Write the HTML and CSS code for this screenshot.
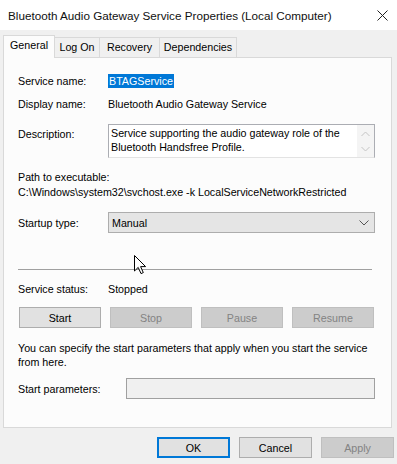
FILE: index.html
```html
<!DOCTYPE html>
<html lang="en">
<head>
  <meta charset="UTF-8">
  <title>Bluetooth Audio Gateway Service Properties (Local Computer)</title>
  <link rel="stylesheet" href="styles.css">
</head>
<body>
  <div class="window">
    <div class="titlebar">
      <span class="title">Bluetooth Audio Gateway Service Properties (Local Computer)</span>
      <svg class="close" width="11" height="11" viewBox="0 0 11 11">
        <path d="M0.5 0.5 L10.5 10.5 M10.5 0.5 L0.5 10.5" stroke="#222" stroke-width="1" fill="none"/>
      </svg>
    </div>

    <div class="tabs">
      <div class="tab tab-general active">General</div>
      <div class="tab tab-logon">Log On</div>
      <div class="tab tab-recovery">Recovery</div>
      <div class="tab tab-deps">Dependencies</div>
    </div>

    <div class="panel">
      <div class="row row-name">
        <span class="label">Service name:</span>
        <span class="selected">BTAGService</span>
      </div>
      <div class="row row-display">
        <span class="label">Display name:</span>
        <span>Bluetooth Audio Gateway Service</span>
      </div>
      <div class="row row-desc">
        <span class="label desc-label">Description:</span>
        <div class="textbox">
          <div class="textbox-text">Service supporting the audio gateway role of the Bluetooth Handsfree Profile.</div>
          <div class="scroll">
            <svg width="9" height="6" viewBox="0 0 9 6"><path d="M0.5 5 L4.5 1 L8.5 5" stroke="#c4c4c4" fill="none"/></svg>
            <svg width="9" height="6" viewBox="0 0 9 6"><path d="M0.5 1 L4.5 5 L8.5 1" stroke="#c4c4c4" fill="none"/></svg>
          </div>
        </div>
      </div>
      <div class="path">
        <div>Path to executable:</div>
        <div>C:\Windows\system32\svchost.exe -k LocalServiceNetworkRestricted</div>
      </div>
      <div class="row row-startup">
        <span class="label">Startup type:</span>
        <div class="select">
          <span>Manual</span>
          <svg width="10" height="6" viewBox="0 0 10 6"><path d="M0.5 0.5 L5 5 L9.5 0.5" stroke="#555" fill="none"/></svg>
        </div>
      </div>

      <div class="divider"></div>

      <div class="row row-status">
        <span class="label">Service status:</span>
        <span>Stopped</span>
      </div>
      <div class="controls">
        <button class="btn">Start</button>
        <button class="btn" disabled>Stop</button>
        <button class="btn" disabled>Pause</button>
        <button class="btn" disabled>Resume</button>
      </div>

      <p class="hint">You can specify the start parameters that apply when you start the service from here.</p>

      <div class="row row-params">
        <span class="label params-label">Start parameters:</span>
        <div class="input"></div>
      </div>

      <svg class="pointer" width="13" height="20" viewBox="0 0 13 20">
        <path d="M0.5 0.5 L0.5 16 L4.2 12.4 L7 18.6 L9.3 17.6 L6.6 11.6 L11.6 11.6 Z" fill="#fff" stroke="#000" stroke-width="1"/>
      </svg>
    </div>

    <div class="footer">
      <button class="btn default">OK</button>
      <button class="btn">Cancel</button>
      <button class="btn" disabled>Apply</button>
    </div>
  </div>
</body>
</html>
```

FILE: styles.css
```css
body {
  margin: 0;
  font-family: "Liberation Sans", Arial, sans-serif;
  font-size: 10.7px;
  color: #000;
  background-color: #f0f0f0;
}
.window {
  width: 397px;
  height: 464px;
  background-color: #f0f0f0;
  overflow: hidden;
}
.titlebar {
  height: 30px;
  background-color: #fff;
  display: flex;
  align-items: center;
  justify-content: space-between;
  padding: 0 9px 0 8px;
}
.title {
  font-size: 11.7px;
  color: #111;
}
.tabs {
  display: flex;
  align-items: flex-end;
  height: 22px;
  margin-top: 5px;
  padding-left: 3px;
}
.tab {
  height: 20px;
  box-sizing: border-box;
  text-align: center;
  line-height: 19px;
  border: 1px solid #d9d9d9;
  border-bottom: none;
  margin-left: -1px;
  background-color: #f0f0f0;
}
.tab-general {
  width: 52px;
}
.tab-logon {
  width: 46px;
}
.tab-recovery {
  width: 61px;
}
.tab-deps {
  width: 78px;
}
.tab.active {
  height: 23px;
  margin-left: 0;
  margin-bottom: -1px;
  line-height: 19px;
  background-color: #fcfcfc;
  position: relative;
  z-index: 1;
}
.panel {
  position: relative;
  box-sizing: border-box;
  height: 371px;
  margin: 0 5px 0 3px;
  padding: 15px 16px 0 14px;
  border: 1px solid #d9d9d9;
  background-color: #fcfcfc;
}
.row {
  display: flex;
  align-items: center;
}
.label {
  width: 90px;
  flex-shrink: 0;
}
.row-name {
  height: 16px;
}
.selected {
  background-color: #0078d7;
  color: #fff;
  padding: 1px 1px;
}
.row-display {
  height: 16px;
  margin-top: 7px;
}
.row-desc {
  margin-top: 12px;
  align-items: flex-start;
}
.desc-label {
  padding-top: 4px;
}
.textbox {
  flex: 1;
  height: 34px;
  box-sizing: border-box;
  border: 1px solid #abadb3;
  border-bottom-color: #e3e3e3;
  background-color: #fff;
  display: flex;
  justify-content: space-between;
}
.textbox-text {
  padding: 1px 2px;
  line-height: 14px;
  width: 240px;
}
.scroll {
  width: 17px;
  background-color: #f4f4f4;
  display: flex;
  flex-direction: column;
  align-items: center;
  justify-content: space-between;
  padding: 6px 0 5px;
  box-sizing: border-box;
}
.path {
  margin-top: 12px;
  line-height: 15px;
}
.row-startup {
  margin-top: 12px;
}
.select {
  flex: 1;
  height: 21px;
  box-sizing: border-box;
  border: 1px solid #adadad;
  background-color: #e5e5e5;
  display: flex;
  align-items: center;
  justify-content: space-between;
  padding: 0 5px 0 3px;
}
.divider {
  margin: 36px 3px 0 0;
  height: 1px;
  background-color: #a0a0a0;
}
.row-status {
  height: 16px;
  margin-top: 11px;
}
.controls {
  display: flex;
  gap: 9px;
  margin-top: 10px;
  padding-left: 1px;
}
.btn {
  font-family: "Liberation Sans", Arial, sans-serif;
  font-size: 10.7px;
  width: 82px;
  height: 21px;
  padding: 0;
  border: 1px solid #adadad;
  background-color: #e1e1e1;
  color: #000;
}
.btn:disabled {
  background-color: #cccccc;
  border-color: #bfbfbf;
  color: #838383;
}
.hint {
  margin: 13px -4px 0 0;
  line-height: 14px;
}
.row-params {
  margin-top: 9px;
}
.params-label {
  width: 108px;
}
.input {
  flex: 1;
  height: 21px;
  box-sizing: border-box;
  border: 1px solid #a0a0a0;
  background-color: #f0f0f0;
}
.pointer {
  position: absolute;
  left: 130px;
  top: 197px;
}
.footer {
  display: flex;
  justify-content: flex-end;
  gap: 9px;
  margin-top: 9px;
  padding-right: 3px;
}
.footer .btn {
  width: 73px;
}
.btn.default {
  border: 2px solid #0078d7;
}
```
